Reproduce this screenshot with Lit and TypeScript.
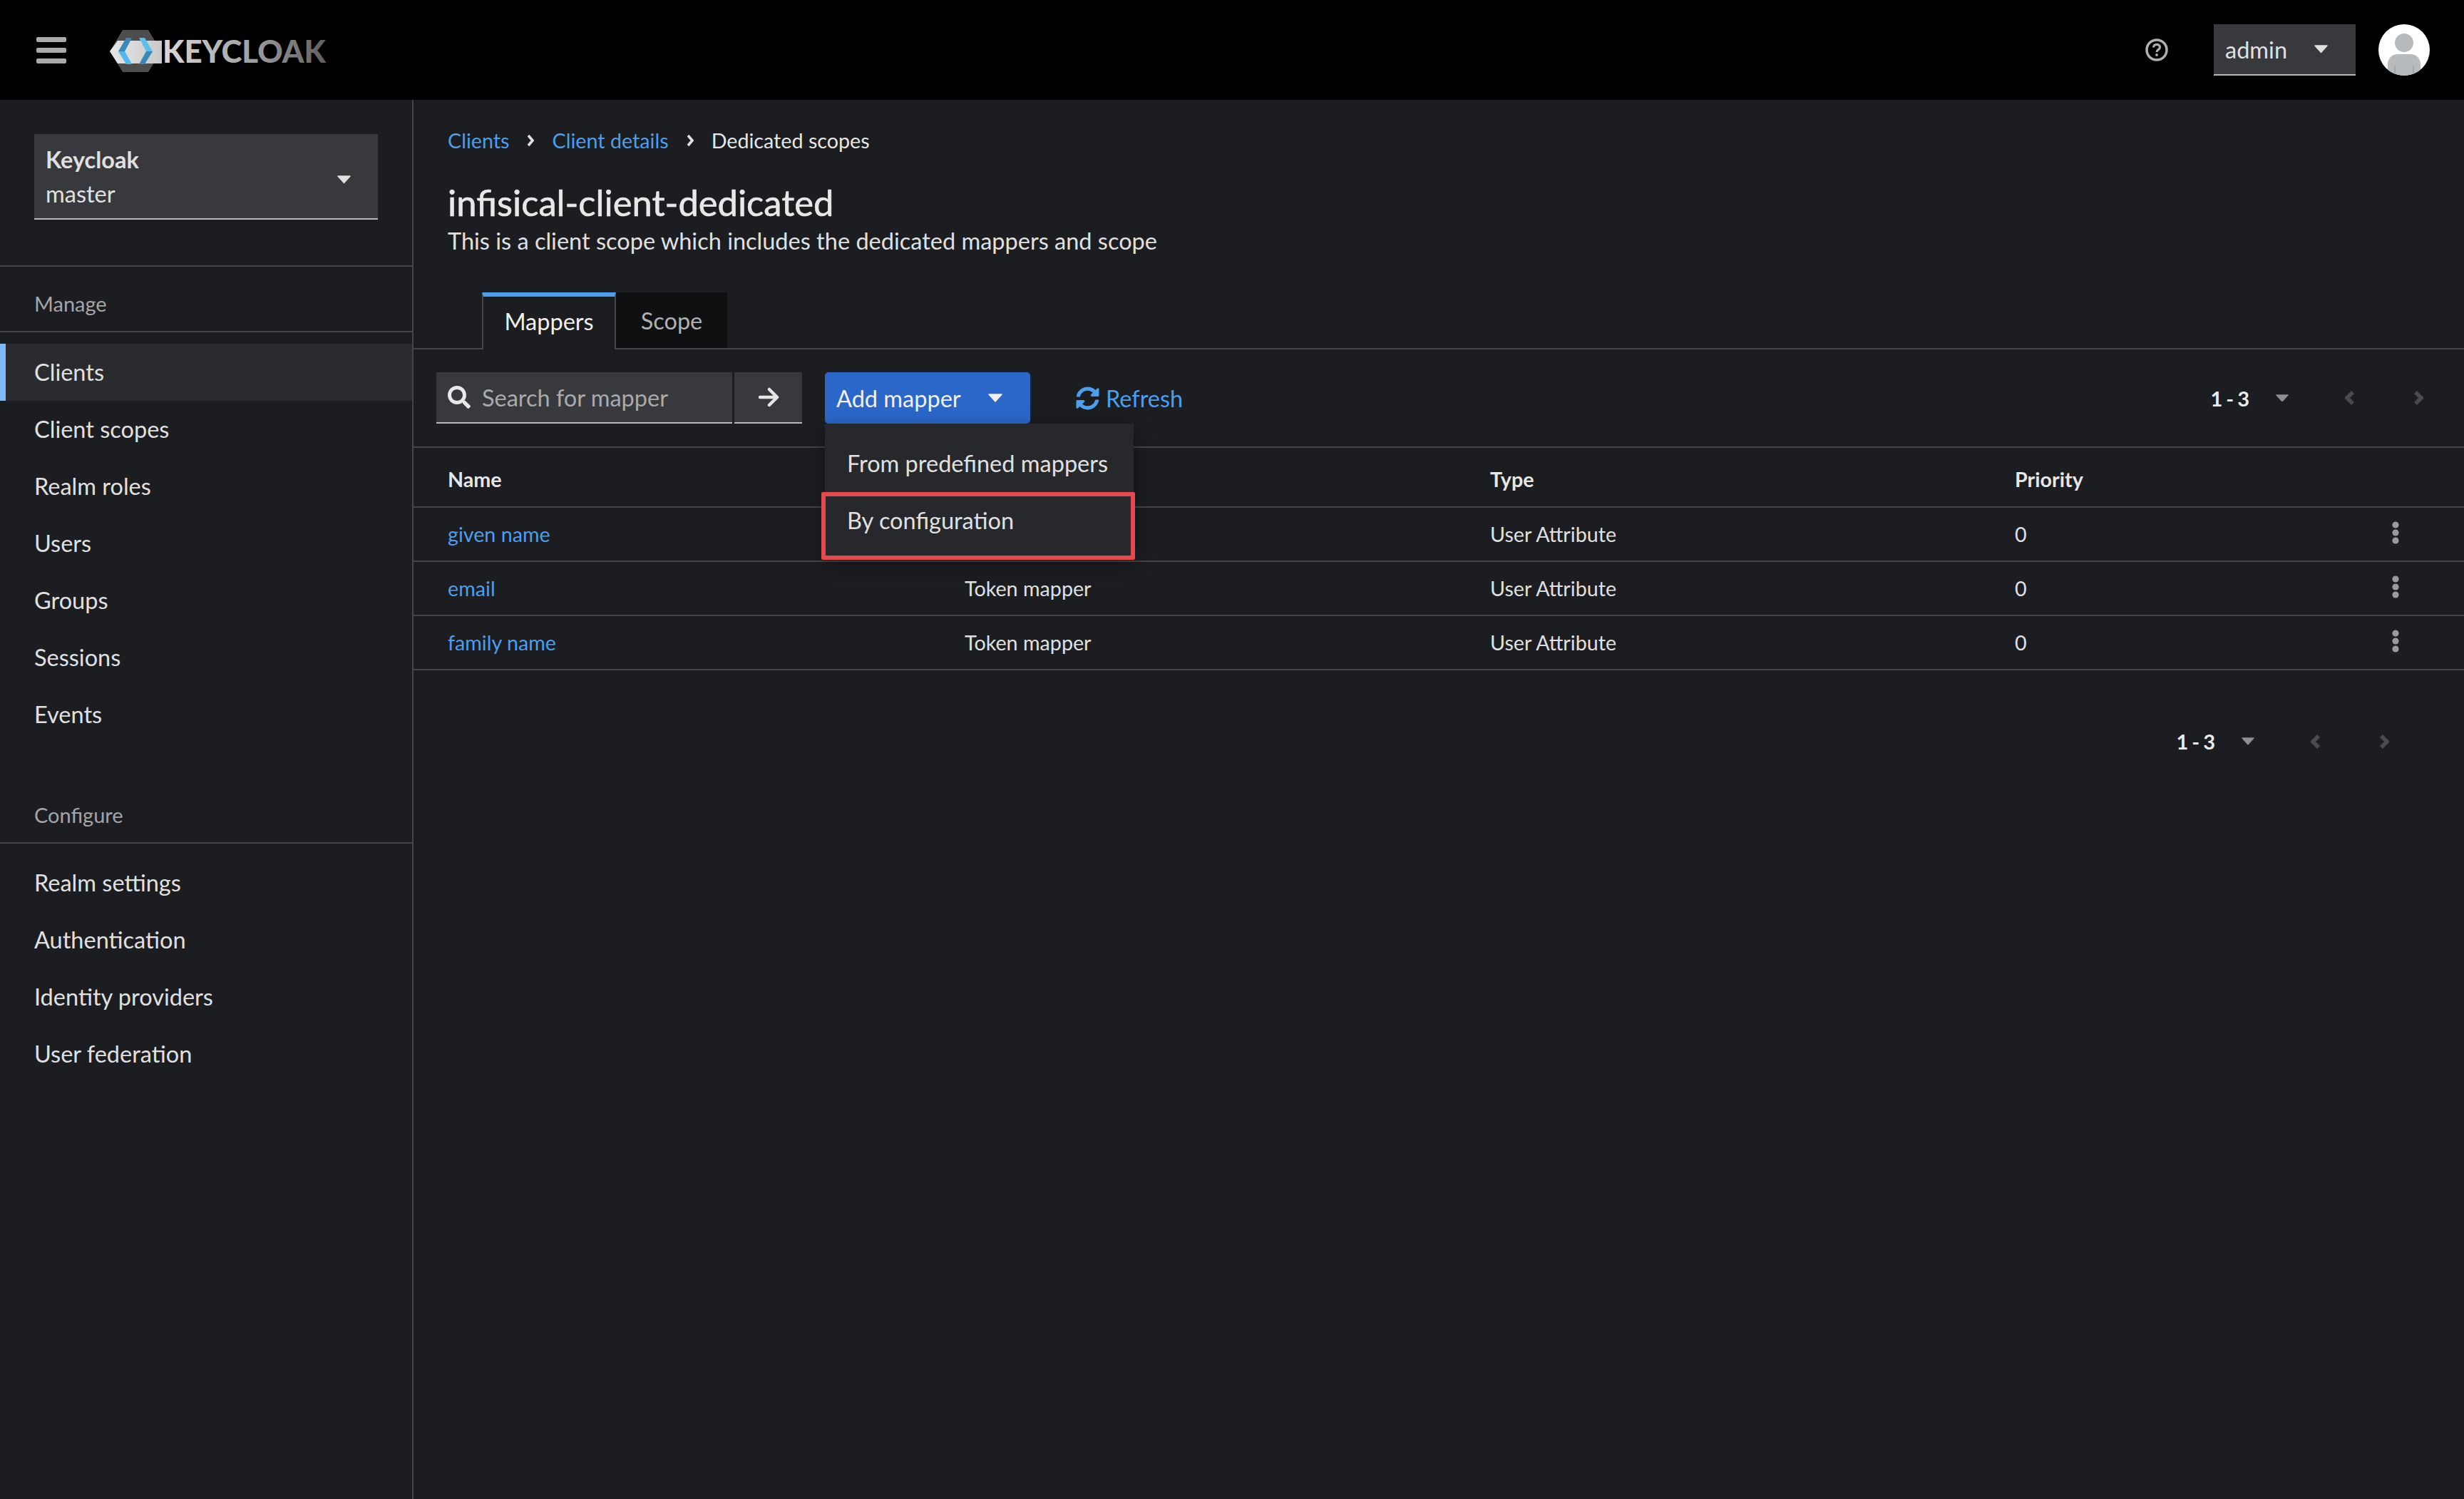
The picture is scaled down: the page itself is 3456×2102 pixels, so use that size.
import { LitElement, html, css } from 'lit';
import { customElement } from 'lit/decorators.js';

const caret = (w = 19, fill = '#e0e0e0') => html`<svg class="caret" width=${w} height=${w * 0.6} viewBox="0 0 20 12"><path d="M1 1h18L10 11z" fill=${fill} stroke=${fill} stroke-width="1.5" stroke-linejoin="round"/></svg>`;

const chevron = (dir: 'left' | 'right') => html`<svg width="14" height="22" viewBox="0 0 14 22"><polyline points=${dir === 'left' ? '11,3 3,11 11,19' : '3,3 11,11 3,19'} fill="none" stroke="#4a4b4e" stroke-width="5.5"/></svg>`;

const kebab = html`<svg class="kebab" width="10" height="32" viewBox="0 0 10 32"><circle cx="5" cy="5" r="4.6" fill="#9a9b9e"/><circle cx="5" cy="16" r="4.6" fill="#9a9b9e"/><circle cx="5" cy="27" r="4.6" fill="#9a9b9e"/></svg>`;

const crumbChevron = html`<svg width="10" height="18" viewBox="0 0 10 18"><polyline points="2,2 8,9 2,16" fill="none" stroke="#e0e0e0" stroke-width="3.6"/></svg>`;

const logo = html`<svg width="340" height="85" viewBox="0 0 340 85">
  <defs>
    <linearGradient id="kc" x1="0" x2="1" y1="0" y2="0"><stop offset="0" stop-color="#d8d8d8"/><stop offset="0.5" stop-color="#a5a5a5"/><stop offset="1" stop-color="#5f5f5f"/></linearGradient>
    <linearGradient id="band" x1="0" x2="1" y1="0" y2="0"><stop offset="0" stop-color="#e6e6e6"/><stop offset="1" stop-color="#c9c9c9"/></linearGradient>
  </defs>
  <polygon points="32,12 68,12 86,42 68,71 32,71 14,42" fill="#4d4d4d"/>
  <polygon points="14,42 25,27 87,27 87,59 25,59" fill="url(#band)"/>
  <polygon points="26,42 37,23 45,23 35,42" fill="#3a88b8"/>
  <polygon points="26,42 35,42 45,60 37,60" fill="#4fb8ee"/>
  <polygon points="55,23 63,23 74,42 65,42" fill="#5bc0f0"/>
  <polygon points="65,42 74,42 63,60 55,60" fill="#3a88b8"/>
  <text x="88" y="58" font-family="Lato, sans-serif" font-weight="900" font-size="43" textLength="229" lengthAdjust="spacingAndGlyphs" fill="url(#kc)">KEYCLOAK</text>
</svg>`;

const avatar = html`<svg width="72" height="72" viewBox="0 0 72 72">
  <defs><clipPath id="av"><circle cx="36" cy="36" r="36"/></clipPath></defs>
  <circle cx="36" cy="36" r="36" fill="#fff"/>
  <g clip-path="url(#av)" fill="#b8bbbe">
    <circle cx="36" cy="26" r="13"/>
    <path d="M13 72V56c0-8 6-14 14-14h18c8 0 14 6 14 14v16z"/>
    <path d="M22 72v-10c0-2 1-4 2-4v14zM50 72v-10c0-2-1-4-2-4v14z" fill="#a2a5a8"/>
  </g>
</svg>`;

const SYNC = 'M370.72 133.28C339.458 104.008 298.888 87.962 255.848 88c-77.458.068-144.328 53.178-162.791 126.85-1.344 5.363-6.122 9.15-11.651 9.15H24.103c-7.498 0-13.194-6.807-11.807-14.176C33.933 94.924 134.813 8 256 8c66.448 0 126.791 26.136 171.315 68.685L463.03 40.97C478.149 25.851 504 36.559 504 57.941V192c0 13.255-10.745 24-24 24H345.941c-21.382 0-32.09-25.851-16.971-40.971l41.75-41.749zM32 296h134.059c21.382 0 32.09 25.851 16.971 40.971l-41.75 41.75c31.262 29.273 71.835 45.319 114.876 45.28 77.418-.07 144.315-53.144 162.787-126.849 1.344-5.363 6.122-9.15 11.651-9.15h57.304c7.498 0 13.194 6.807 11.807 14.176C478.067 417.076 377.187 504 256 504c-66.448 0-126.791-26.136-171.315-68.685L48.97 471.03C33.851 486.149 8 475.441 8 454.059V320c0-13.255 10.745-24 24-24z';
const SEARCH = 'M505 442.7L405.3 343c-4.5-4.5-10.6-7-17-7H372c27.6-35.3 44-79.7 44-128C416 93.1 322.9 0 208 0S0 93.1 0 208s93.1 208 208 208c48.3 0 92.7-16.4 128-44v16.3c0 6.4 2.5 12.5 7 17l99.7 99.7c9.4 9.4 24.6 9.4 33.9 0l28.3-28.3c9.4-9.4 9.4-24.6.1-34zM208 336c-70.7 0-128-57.2-128-128 0-70.7 57.2-128 128-128 70.7 0 128 57.2 128 128 0 70.7-57.2 128-128 128z';

const manage = ['Clients', 'Client scopes', 'Realm roles', 'Users', 'Groups', 'Sessions', 'Events'];
const configure = ['Realm settings', 'Authentication', 'Identity providers', 'User federation'];
// the open menu covers the category header and the first row's category
const rows = [
  { name: 'given name', category: '', type: 'User Attribute', priority: '0' },
  { name: 'email', category: 'Token mapper', type: 'User Attribute', priority: '0' },
  { name: 'family name', category: 'Token mapper', type: 'User Attribute', priority: '0' },
];

@customElement('app-root')
export class AppRoot extends LitElement {
  static styles = css`
    :host {
      display: block;
      width: 3456px;
      height: 2102px;
      overflow: hidden;
      background: #1b1d21;
      color: #e0e0e0;
      font-family: 'Lato', 'Noto Sans', sans-serif;
      font-size: 32.5px;
    }
    a { color: #4a9fef; text-decoration: none; }

    .header {
      height: 140px;
      background: #000;
      display: flex;
      align-items: center;
      padding-left: 51px;
    }
    .burger { display: flex; flex-direction: column; gap: 8px; width: 42px; }
    .burger span { height: 7px; border-radius: 2px; background: #aaa; }
    .logo { margin: 5px 0 0 47px; display: flex; }
    .header-right { margin-left: auto; display: flex; align-items: center; padding-right: 48px; }
    .help { display: flex; }
    .user {
      margin-left: 64px;
      width: 199px;
      height: 72px;
      box-sizing: border-box;
      background: #38393c;
      border-bottom: 2px solid #b8bbbe;
      display: flex;
      align-items: center;
      padding: 0 16px;
      color: #e0e0e0;
    }
    .user .caret { margin-left: 38px; }
    .avatar { margin-left: 32px; display: flex; }

    .body { display: flex; height: 1962px; }
    .sidebar {
      width: 580px;
      flex: none;
      box-sizing: border-box;
      border-right: 2px solid #444548;
      padding-top: 48px;
    }
    .realm {
      margin-left: 48px;
      width: 482px;
      height: 120px;
      box-sizing: border-box;
      padding: 13px 16px 11px;
      background: #38393c;
      border-bottom: 2px solid #b8bbbe;
      display: flex;
      align-items: center;
      justify-content: space-between;
      line-height: 48px;
    }
    .realm b { display: block; font-weight: 700; }
    .realm .caret { margin-right: 22px; margin-top: 8px; }
    .nav-title {
      padding: 30px 0 16px 48px;
      line-height: 44px;
      font-size: 29px;
      color: #a4a5a7;
      border-bottom: 2px solid #444548;
    }
    .sec-manage { margin-top: 64px; border-top: 2px solid #444548; }
    .sec-configure { margin-top: 79px; }
    .sec-configure .nav-title { padding-top: 0; }
    .nav-list { padding-top: 16px; }
    .sec-configure .nav-list { padding-top: 15px; }
    .nav-item {
      height: 80px;
      box-sizing: border-box;
      padding: 0 0 2px 48px;
      display: flex;
      align-items: center;
      color: #e0e0e0;
    }
    .nav-item.on {
      background: #292b2f;
      box-shadow: inset 8px 0 0 #7fb9f5;
    }

    .main { flex: 1; position: relative; min-width: 0; }
    .crumbs {
      padding: 35px 48px 1px;
      height: 44px;
      line-height: 44px;
      font-size: 28.7px;
      display: flex;
      align-items: center;
    }
    .crumbs svg { margin: 0 25px; }
    .crumbs span { color: #e6e6e6; }
    h1 {
      margin: 32px 0 0 48px;
      font-size: 50.7px;
      line-height: 64px;
      font-weight: 400;
      -webkit-text-stroke: 0.6px #e8e8e8;
      color: #e8e8e8;
    }
    .desc { margin-left: 48px; line-height: 44px; color: #e0e0e0; }
    .tabs {
      margin-top: 50px;
      padding-left: 96px;
      height: 80px;
      box-sizing: border-box;
      border-bottom: 2px solid #444548;
      display: flex;
    }
    .tab {
      height: 80px;
      box-sizing: border-box;
      display: flex;
      align-items: center;
      justify-content: center;
    }
    .tab.on {
      width: 188px;
      padding-bottom: 6px;
      background: #1b1d21;
      border-top: 6px solid #4a9fef;
      border-left: 2px solid #444548;
      border-right: 2px solid #444548;
      color: #f0f0f0;
    }
    .tab.off {
      width: 156px;
      height: 78px;
      background: #0f1012;
      color: #b0b1b3;
    }

    .toolbar {
      display: flex;
      align-items: center;
      padding: 32px 57px 32px 32px;
      border-bottom: 2px solid #444548;
    }
    .search {
      width: 415px;
      height: 72px;
      box-sizing: border-box;
      background: #38393c;
      border-bottom: 2px solid #b8bbbe;
      display: flex;
      align-items: center;
      gap: 16px;
      padding-left: 16px;
      color: #a9aaac;
    }
    .go {
      margin-left: 3px;
      width: 95px;
      height: 72px;
      box-sizing: border-box;
      background: #38393c;
      border-bottom: 2px solid #b8bbbe;
      display: flex;
      align-items: center;
      justify-content: center;
    }
    .add-wrap { position: relative; margin-left: 32px; }
    .add {
      width: 288px;
      height: 72px;
      box-sizing: border-box;
      background: #2b66c9;
      border-radius: 5px;
      display: flex;
      align-items: center;
      padding-left: 16px;
      color: #f0f0f0;
    }
    .add .caret { margin-left: 38px; }
    .menu {
      position: absolute;
      z-index: 2;
      top: 100%;
      left: 0;
      width: 433px;
      height: 187px;
      box-sizing: border-box;
      padding-top: 15px;
      background: #26282c;
      box-shadow: 0 8px 24px rgba(0, 0, 0, 0.4);
    }
    .menu-item {
      height: 80px;
      display: flex;
      align-items: center;
      padding-left: 31px;
      color: #e0e0e0;
    }
    .highlight {
      position: absolute;
      top: 96px;
      left: -5px;
      width: 440px;
      height: 95px;
      box-sizing: border-box;
      border: 6px solid #e5484d;
      border-radius: 2px;
    }
    .refresh {
      margin-left: 64px;
      display: flex;
      align-items: center;
      gap: 9px;
      color: #4a9fef;
    }

    .pager { display: flex; align-items: center; font-size: 29px; font-weight: 700; letter-spacing: 1px; }
    .pager .count { white-space: pre; word-spacing: -4px; color: #ececec; }
    .pager .caret { margin-left: 36px; margin-right: -3px; }
    .pager svg + svg { margin-left: 82px; }
    .toolbar .pager { margin-left: auto; }
    .pager.bottom { justify-content: flex-end; padding: 82px 105px 0 0; }

    .row {
      display: grid;
      grid-template-columns: 725px 737px 736px 1fr auto;
      align-items: center;
      padding: 0 91px 0 48px;
      height: 76px;
      box-sizing: border-box;
      border-bottom: 2px solid #444548;
      font-size: 28.7px;
    }
    .row.head {
      height: 84px;
      padding-top: 5px;
      font-weight: 700;
      color: #e6e6e6;
    }
    .row .kebab { display: block; margin-bottom: 4px; }
  `;

  render() {
    return html`
      <div class="header">
        <div class="burger"><span></span><span></span><span></span></div>
        <div class="logo">${logo}</div>
        <div class="header-right">
          <span class="help">
            <svg width="32" height="32" viewBox="0 0 32 32" fill="none" stroke="#b0b0b0">
              <circle cx="16" cy="16" r="14" stroke-width="3.5"/>
              <path d="M11.5 12.5c0-2.6 2-4.2 4.5-4.2s4.5 1.6 4.5 4c0 3.4-4.5 3.2-4.5 6.6" stroke-width="3.2"/>
              <circle cx="16" cy="23" r="1.9" fill="#b0b0b0" stroke="none"/>
            </svg>
          </span>
          <div class="user">admin${caret()}</div>
          <span class="avatar">${avatar}</span>
        </div>
      </div>
      <div class="body">
        <aside class="sidebar">
          <div class="realm">
            <div><b>Keycloak</b>master</div>
            ${caret()}
          </div>
          <div class="sec-manage">
            <div class="nav-title">Manage</div>
            <div class="nav-list">
              ${manage.map((m, i) => html`<div class="nav-item ${i === 0 ? 'on' : ''}">${m}</div>`)}
            </div>
          </div>
          <div class="sec-configure">
            <div class="nav-title">Configure</div>
            <div class="nav-list">
              ${configure.map((m) => html`<div class="nav-item">${m}</div>`)}
            </div>
          </div>
        </aside>
        <main class="main">
          <div class="crumbs">
            <a>Clients</a>${crumbChevron}<a>Client details</a>${crumbChevron}<span>Dedicated scopes</span>
          </div>
          <h1>infisical-client-dedicated</h1>
          <div class="desc">This is a client scope which includes the dedicated mappers and scope</div>
          <div class="tabs">
            <div class="tab on">Mappers</div>
            <div class="tab off">Scope</div>
          </div>
          <div class="toolbar">
            <div class="search">
              <svg width="32" height="32" viewBox="0 0 512 512"><path d=${SEARCH} fill="#e8e8e8"/></svg>
              Search for mapper
            </div>
            <div class="go">
              <svg width="30" height="28" viewBox="0 0 30 28" fill="none" stroke="#e6e6e6" stroke-width="4.5" stroke-linecap="round" stroke-linejoin="round"><path d="M3 14h23M16 3l11 11-11 11"/></svg>
            </div>
            <div class="add-wrap">
              <div class="add">Add mapper${caret(20, '#f0f0f0')}</div>
              <div class="menu">
                <div class="menu-item">From predefined mappers</div>
                <div class="menu-item">By configuration</div>
                <div class="highlight"></div>
              </div>
            </div>
            <a class="refresh"><svg width="33" height="33" viewBox="0 0 512 512"><path d=${SYNC} fill="#4a9fef"/></svg>Refresh</a>
            ${this.pager('')}
          </div>
          <div class="row head"><span>Name</span><span></span><span>Type</span><span>Priority</span><span></span></div>
          ${rows.map(
            (r) => html`<div class="row">
              <a>${r.name}</a><span>${r.category}</span><span>${r.type}</span><span>${r.priority}</span>${kebab}
            </div>`
          )}
          ${this.pager('bottom')}
        </main>
      </div>
    `;
  }

  private pager(extra: string) {
    return html`<div class="pager ${extra}">
      <span class="count">1 - 3</span>${caret(18, '#8e8f91')}${chevron('left')}${chevron('right')}
    </div>`;
  }
}
